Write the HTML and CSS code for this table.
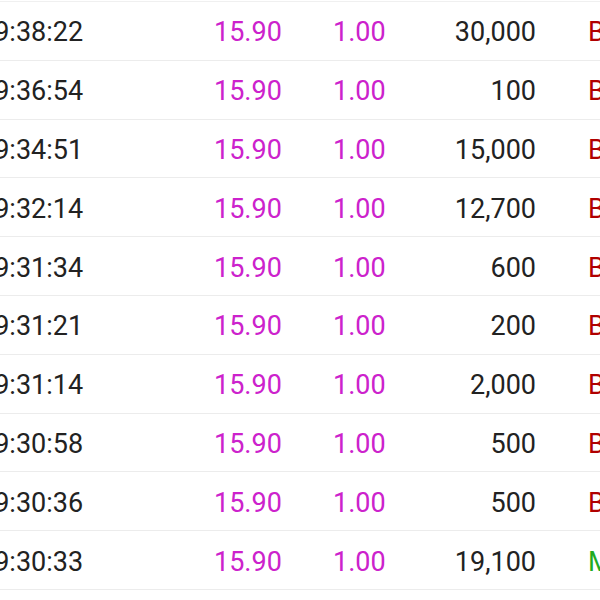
FILE: index.html
```html
<!DOCTYPE html>
<html>
<head>
<meta charset="utf-8">
<link rel="stylesheet" href="styles.css">
</head>
<body>
<div class="top"></div>
<div class="list">
  <div class="row"><span class="time">09:38:22</span><span class="price">15.90</span><span class="chg">1.00</span><span class="qty">30,000</span><span class="type buy">B</span></div>
  <div class="row"><span class="time">09:36:54</span><span class="price">15.90</span><span class="chg">1.00</span><span class="qty">100</span><span class="type buy">B</span></div>
  <div class="row"><span class="time">09:34:51</span><span class="price">15.90</span><span class="chg">1.00</span><span class="qty">15,000</span><span class="type buy">B</span></div>
  <div class="row"><span class="time">09:32:14</span><span class="price">15.90</span><span class="chg">1.00</span><span class="qty">12,700</span><span class="type buy">B</span></div>
  <div class="row"><span class="time">09:31:34</span><span class="price">15.90</span><span class="chg">1.00</span><span class="qty">600</span><span class="type buy">B</span></div>
  <div class="row"><span class="time">09:31:21</span><span class="price">15.90</span><span class="chg">1.00</span><span class="qty">200</span><span class="type buy">B</span></div>
  <div class="row"><span class="time">09:31:14</span><span class="price">15.90</span><span class="chg">1.00</span><span class="qty">2,000</span><span class="type buy">B</span></div>
  <div class="row"><span class="time">09:30:58</span><span class="price">15.90</span><span class="chg">1.00</span><span class="qty">500</span><span class="type buy">B</span></div>
  <div class="row"><span class="time">09:30:36</span><span class="price">15.90</span><span class="chg">1.00</span><span class="qty">500</span><span class="type buy">B</span></div>
  <div class="row"><span class="time">09:30:33</span><span class="price">15.90</span><span class="chg">1.00</span><span class="qty">19,100</span><span class="type mid">M</span></div>
</div>
</body>
</html>
```
FILE: styles.css
```css
html, body {
  margin: 0;
  padding: 0;
  background: #ffffff;
  overflow: hidden;
}
body {
  width: 600px;
  height: 600px;
  font-family: Roboto, "Noto Sans", sans-serif;
  font-size: 27px;
  color: #222222;
}
.top {
  height: 1px;
  border-bottom: 1px solid #f0f0f0;
}
.list {
  margin-left: -16px;
  width: 640px;
}
.row {
  display: flex;
  align-items: center;
  box-sizing: border-box;
  height: 58.8px;
  padding-top: 3px;
  border-bottom: 1px solid #ececec;
  white-space: nowrap;
}
.time {
  width: 230px;
  margin-left: -5px;
  margin-right: 5px;
  color: #222222;
}
.price {
  width: 119px;
  color: #cc22cc;
}
.chg {
  width: 90px;
  color: #cc22cc;
}
.qty {
  width: 113px;
  text-align: right;
}
.type {
  margin-left: 52px;
}
.buy {
  color: #b00000;
}
.mid {
  color: #22aa22;
}
```
